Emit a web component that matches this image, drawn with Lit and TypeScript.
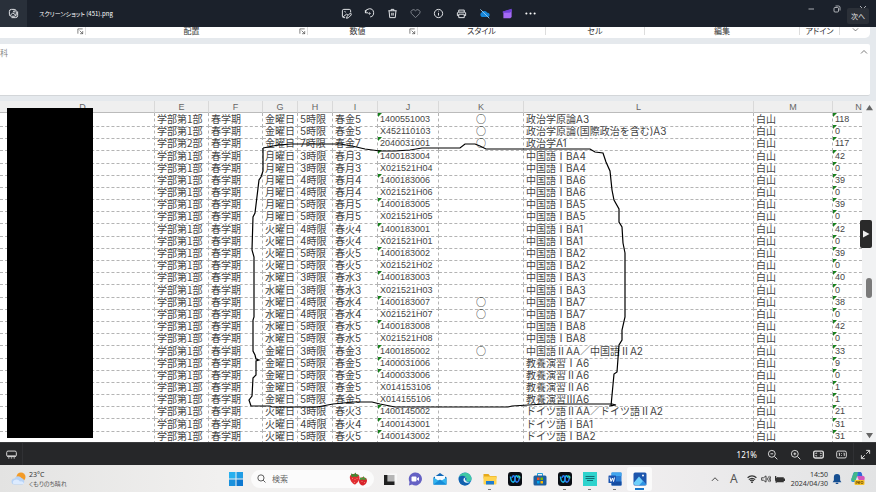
import { LitElement, html, css, svg } from "lit";
import { customElement } from "lit/decorators.js";
import { classMap } from "lit/directives/class-map.js";

type Course = [string, string, string, string, string, boolean, string, string];

// [department, day, period, slot, code, circle, title, seats]
const COURSES: Course[] = [
  ["学部第1部", "金曜日", "5時限", "春金5", "1400551003", true, "政治学原論A3", "118"],
  ["学部第1部", "金曜日", "5時限", "春金5", "X452110103", true, "政治学原論(国際政治を含む)A3", "0"],
  ["学部第2部", "金曜日", "7時限", "春金7", "2040031001", true, "政治学A1", "117"],
  ["学部第1部", "月曜日", "3時限", "春月3", "1400183004", false, "中国語ⅠBA4", "42"],
  ["学部第1部", "月曜日", "3時限", "春月3", "X021521H04", false, "中国語ⅠBA4", "0"],
  ["学部第1部", "月曜日", "4時限", "春月4", "1400183006", false, "中国語ⅠBA6", "39"],
  ["学部第1部", "月曜日", "4時限", "春月4", "X021521H06", false, "中国語ⅠBA6", "0"],
  ["学部第1部", "月曜日", "5時限", "春月5", "1400183005", false, "中国語ⅠBA5", "39"],
  ["学部第1部", "月曜日", "5時限", "春月5", "X021521H05", false, "中国語ⅠBA5", "0"],
  ["学部第1部", "火曜日", "4時限", "春火4", "1400183001", false, "中国語ⅠBA1", "42"],
  ["学部第1部", "火曜日", "4時限", "春火4", "X021521H01", false, "中国語ⅠBA1", "0"],
  ["学部第1部", "火曜日", "5時限", "春火5", "1400183002", false, "中国語ⅠBA2", "39"],
  ["学部第1部", "火曜日", "5時限", "春火5", "X021521H02", false, "中国語ⅠBA2", "0"],
  ["学部第1部", "水曜日", "3時限", "春水3", "1400183003", false, "中国語ⅠBA3", "40"],
  ["学部第1部", "水曜日", "3時限", "春水3", "X021521H03", false, "中国語ⅠBA3", "0"],
  ["学部第1部", "水曜日", "4時限", "春水4", "1400183007", true, "中国語ⅠBA7", "38"],
  ["学部第1部", "水曜日", "4時限", "春水4", "X021521H07", true, "中国語ⅠBA7", "0"],
  ["学部第1部", "水曜日", "5時限", "春水5", "1400183008", false, "中国語ⅠBA8", "42"],
  ["学部第1部", "水曜日", "5時限", "春水5", "X021521H08", false, "中国語ⅠBA8", "0"],
  ["学部第1部", "金曜日", "3時限", "春金3", "1400185002", true, "中国語ⅡAA／中国語ⅡA2", "33"],
  ["学部第1部", "金曜日", "5時限", "春金5", "1400031006", false, "教養演習ⅠA6", "9"],
  ["学部第1部", "金曜日", "5時限", "春金5", "1400033006", false, "教養演習ⅡA6", "0"],
  ["学部第1部", "金曜日", "5時限", "春金5", "X014153106", false, "教養演習ⅡA6", "1"],
  ["学部第1部", "金曜日", "5時限", "春金5", "X014155106", false, "教養演習ⅢA6", "1"],
  ["学部第1部", "火曜日", "3時限", "春火3", "1400145002", false, "ドイツ語ⅡAA／ドイツ語ⅡA2", "21"],
  ["学部第1部", "火曜日", "4時限", "春火4", "1400143001", false, "ドイツ語ⅠBA1", "31"],
  ["学部第1部", "火曜日", "5時限", "春火5", "1400143002", false, "ドイツ語ⅠBA2", "31"],
];

const COLUMNS = ["D", "E", "F", "G", "H", "I", "J", "K", "L", "M", "N"];

const icon = (body: unknown) => html`<svg class="icon" viewBox="0 0 16 16" aria-hidden="true">${body}</svg>`;

// Roman numerals are set full-width, like the kanji around them.
const titleText = (title: string) =>
  title.split(/([ⅠⅡⅢ])/).map((part) => (/^[ⅠⅡⅢ]$/.test(part) ? html`<span class="roman">${part}</span>` : part));

const TOOLS: [string, unknown][] = [
  ["編集", svg`<path d="M14 6V4a2 2 0 0 0-2-2H4a2 2 0 0 0-2 2v8a2 2 0 0 0 2 2h2M3 13l5-4 2 1M5 5l2 1M14 7l-5 5-1 3 3-1 4-4Z"/>`],
  ["回転", svg`<path d="M2 7a6 6 0 1 1 7 6M2 3v4h4"/><circle cx="8" cy="8" r="1"/>`],
  ["削除", svg`<path d="M2 4h12M6 4V2h4v2M3 4l1 10h8l1-10M7 7v4M9 7v4"/>`],
  ["お気に入り", svg`<path class="dim" d="M8 14 2 8a3 3 0 0 1 6-4 3 3 0 0 1 6 4Z"/>`],
  ["情報", svg`<circle cx="8" cy="8" r="6"/><path d="M8 7v4M8 4v1"/>`],
  ["印刷", svg`<path d="M4 6V3h8v3M4 11H2V7l1-1h10l1 1v4h-2M4 9h8v5H4Z"/>`],
  ["OneDrive", svg`<path class="cloud" d="M4 13a4 4 0 0 1 0-7 5 5 0 0 1 8 1 3 3 0 0 1 1 6Z"/><path class="slash" d="m2 2 13 13"/>`],
  ["Clipchamp", svg`<path class="clip" d="M2 5 14 2v11l-2 2H2Z"/><path class="clip-top" d="M1 5 14 1v4l-3 2H1Z"/>`],
  ["その他", svg`<g class="dots"><circle cx="2" cy="8" r="1.5"/><circle cx="8" cy="8" r="1.5"/><circle cx="14" cy="8" r="1.5"/></g>`],
];

const ZOOM_TOOLS: [string, unknown][] = [
  ["縮小", svg`<circle cx="7" cy="7" r="5"/><path d="m11 11 4 4M5 7h4"/>`],
  ["拡大", svg`<circle cx="7" cy="7" r="5"/><path d="m11 11 4 4M5 7h4M7 5v4"/>`],
  ["ウィンドウに合わせる", svg`<rect x="1" y="3" width="14" height="10" rx="2" stroke-width="2"/><path d="M4 7V6h2M12 7V6h-2M4 9v1h2M12 9v1h-2"/>`],
  ["実際のサイズ", svg`<rect x="1" y="3" width="14" height="10" rx="2"/><path d="M4 6h1v4M11 6h1v4M8 6v1M8 9v1"/>`],
];

const webex = svg`<rect width="28" height="28" rx="6" fill="#0a0d14"/><g fill="none" stroke-width="3"><path d="M5 9c1 14 8 14 9 5s5-8 6-2" stroke="#19b6e6"/><path d="M23 9c-1 14-8 14-9 5s-5-8-6-2" stroke="#2d74ea"/><path d="M20 8c3 0 4 2 3 5" stroke="#42d39b"/></g>`;

const APPS: { name: string; art: unknown; open?: boolean; active?: boolean }[] = [
  { name: "タスク ビュー", art: svg`<path d="M8 3h20v18H8Z" fill="#f8f8f8"/><path d="M9 6h14v14H9Z" fill="#b5b5b5"/><path d="M2 6h7v13h14v7H2Z" fill="#202020"/>` },
  { name: "チャット", art: svg`<path d="M14 1a13 13 0 1 1-6 24l-6 2 1-7A13 13 0 0 1 14 1Z" fill="#6561c4"/><rect x="7" y="9" width="10" height="10" rx="2" fill="#fff"/><path d="m18 13 4-3v8l-4-3Z" fill="#fff"/>` },
  { name: "メール", art: svg`<path d="M1 11 14 2l13 9v14H1Z" fill="#1267b7"/><path d="M4 8h20v9H4Z" fill="#f4fbff"/><path d="m1 11 13 8 13-8v14H1Z" fill="#32b4ef"/><path d="m1 25 13-10 13 10Z" fill="#168cd8"/>` },
  { name: "Edge", art: svg`<circle cx="14" cy="14" r="13" fill="#1478cf"/><path d="M2 10C7-2 25-1 27 13c0 7-8 8-11 5 4-6-5-12-14-8Z" fill="#3fc9a4"/><path d="M2 11c5-7 15-3 15 3-6-3-7 8 6 9C16 31-1 27 2 11Z" fill="#1261ae"/><path d="M16 11c-5 2-1 10 7 9-6 4-13 0-12-5 0-3 3-4 5-4Z" fill="#eef8fb"/>` },
  { name: "エクスプローラー", open: true, art: svg`<path d="M1 4h10l3 4h13v5H1Z" fill="#e6a91b"/><rect x="1" y="9" width="26" height="16" rx="2" fill="#ffd34f"/><path d="M6 18h16v7H6Z" fill="#1d7bd1"/>` },
  { name: "Webex", art: webex },
  { name: "Microsoft Store", art: svg`<path d="M9 8V3h10v5" fill="none" stroke="#1d9fdc" stroke-width="2"/><rect x="1" y="7" width="26" height="20" rx="3" fill="#1d5f9f"/><path d="M8 11h5v5H8Z" fill="#f25022"/><path d="M15 11h5v5h-5Z" fill="#7fba00"/><path d="M8 18h5v5H8Z" fill="#00a4ef"/><path d="M15 18h5v5h-5Z" fill="#ffb900"/>` },
  { name: "Webex 会議", open: true, art: webex },
  { name: "メモ", open: true, art: svg`<rect width="28" height="28" fill="#2ed3cd"/><path d="M5 9h18M5 13h18M8 17h12" stroke="#126d74" stroke-width="2"/>` },
  { name: "Word", open: true, art: svg`<rect x="7" y="1" width="20" height="26" rx="2" fill="#2b7cd3"/><path d="M7 1h20v7H7Z" fill="#41a5ee"/><path d="M7 19h20v8H7Z" fill="#164da0"/><rect x="1" y="7" width="15" height="15" rx="1" fill="#1b54b0"/><path d="m4 11 2 8 3-7 2 7 2-8" stroke="#fff" stroke-width="2" fill="none"/>` },
  { name: "フォト", open: true, active: true, art: svg`<rect x="1" y="1" width="26" height="26" rx="3" fill="#1d56ad"/><path d="M1 22 12 9l15 17H3Z" fill="#6fd0fb"/><path d="m12 27 8-9 7 8Z" fill="#2d93e4"/><circle cx="20" cy="7" r="2" fill="#fff"/>` },
];

@customElement("app-root")
export class AppRoot extends LitElement {
  static styles = css`
    :host {
      display: flex;
      flex-direction: column;
      height: 100vh;
      overflow: hidden;
      position: relative;
      background: #e5e9ed;
      font-family: "Noto Sans", "Noto Sans CJK JP", sans-serif;
      font-size: 8px;
      color: #333;
    }
    * { box-sizing: border-box; }
    button {
      border: 0;
      padding: 0;
      margin: 0;
      background: none;
      color: inherit;
      font: inherit;
      display: grid;
      place-items: center;
    }
    .icon {
      width: 11px;
      height: 11px;
      display: block;
      fill: none;
      stroke: currentColor;
      stroke-width: 1.4;
    }
    .titlebar {
      flex: none;
      height: 27px;
      display: grid;
      grid-template-columns: 1fr auto 1fr;
      background: #1b212b;
      color: #e8eaed;
    }
    .file { display: flex; align-items: center; gap: 12px; }
    .app { width: 27px; height: 27px; background: #29303a; }
    .name {
      font: 6px "Noto Sans CJK JP", sans-serif;
      font-feature-settings: "palt";
      white-space: nowrap;
      color: #fff;
    }
    .tools { display: flex; }
    .tools button { width: 23px; }
    .dim { stroke: #7d828a; }
    .cloud { fill: #1686d9; stroke: none; }
    .slash { stroke: #8fc5ee; }
    .clip { fill: #a46af5; stroke: none; }
    .clip-top { fill: #7141d8; stroke: none; }
    .dots { fill: #fff; stroke: none; }
    .window { display: flex; justify-content: flex-end; height: 17px; }
    .window button { width: 26px; }
    .window .icon { width: 8px; height: 8px; }
    .next {
      position: absolute;
      right: 7px;
      top: 8px;
      width: 22px;
      height: 16px;
      border-radius: 2px;
      background: #2b3038;
      color: #eee;
      font-size: 7px;
      font-feature-settings: "palt";
    }
    .ribbon {
      flex: none;
      height: 11px;
      margin-right: 6px;
      display: grid;
      grid-template-columns: 86fr 222fr 110fr 128fr 99fr 155fr 40fr 30fr;
      background: #fff;
      border-radius: 0 0 5px 0;
      line-height: 8px;
      font-feature-settings: "palt";
      text-align: center;
    }
    .group { display: flex; height: 8px; border-right: 1px solid #ddd; }
    .group span { flex: 1; }
    .group:last-child { border: 0; justify-content: center; }
    .launch { width: 10px; }
    .ribbon .icon { width: 7px; height: 7px; }
    .formula {
      flex: none;
      height: 52px;
      margin: 6px 6px 5px 0;
      display: flex;
      justify-content: space-between;
      align-items: flex-start;
      padding: 4px 2px 0 0;
      background: #fff;
      border-bottom: 1px solid #d3d6d9;
      border-radius: 0 2px 2px 0;
      color: #888;
      line-height: 10px;
    }
    .formula .icon { width: 8px; height: 8px; color: #444; }
    .sheet { flex: 1; min-height: 0; position: relative; display: flex; background: #fff; }
    table { flex: 1; min-width: 0; display: flex; flex-direction: column; overflow: hidden; }
    thead { flex: none; display: block; }
    tbody { flex: 1; min-height: 0; display: grid; grid-template-rows: repeat(27, minmax(0, 1fr)); }
    tr {
      display: grid;
      grid-template-columns: 155fr 54px 54px 35px 35px 45px 61px 85px 230fr 79px 29px;
      min-height: 0;
    }
    th {
      height: 12px;
      padding: 0;
      background: #efefef;
      border-right: 1px solid #d9d9d9;
      border-bottom: 1px solid #bbb;
      font: 9px/12px "Liberation Sans", sans-serif;
      color: #666;
    }
    th:first-child { padding-left: 11px; }
    th:last-child { padding-left: 22px; border-right: 0; }
    td {
      padding: 0 0 0 2px;
      border-right: 1px dashed #b4b4b4;
      border-bottom: 1px dashed #b4b4b4;
      font: 10px/12px Inter, "Noto Sans CJK JP", sans-serif;
      color: #444;
      white-space: nowrap;
      position: relative;
    }
    td:last-child { border-right: 0; }
    .cjk { font-family: "Noto Sans CJK JP", sans-serif; }
    .roman { display: inline-block; width: 10px; text-align: center; font-family: "Noto Sans CJK JP", sans-serif; line-height: 10px; }
    .code { font: 9px/13px "Liberation Sans", sans-serif; }
    .center { padding: 0; text-align: center; font-family: "Noto Sans CJK JP", sans-serif; color: #222; }
    .flag::before {
      content: "";
      position: absolute;
      left: 0;
      top: 0;
      border-top: 4px solid #16801c;
      border-right: 4px solid transparent;
    }
    .scroll {
      width: 14px;
      display: flex;
      flex-direction: column;
      align-items: center;
      justify-content: space-between;
      padding: 3px 0;
      background: #f1f2f3;
    }
    .scroll .icon { width: 7px; height: 7px; fill: #666; stroke: none; }
    .thumb {
      position: absolute;
      right: 4px;
      top: 52%;
      width: 6px;
      height: 20px;
      border-radius: 3px;
      background: #7a7a7a;
    }
    .forward {
      position: absolute;
      right: 4px;
      top: 35%;
      width: 12px;
      height: 28px;
      border-radius: 2px;
      background: #2a2a2a;
      color: #eee;
    }
    .forward .icon { width: 8px; height: 8px; fill: #eee; stroke: none; }
    .mask { position: absolute; left: 7px; top: 7px; bottom: 4px; width: 86px; background: #000; }
    .pen {
      position: absolute;
      inset: 0;
      width: 100%;
      height: 100%;
      fill: none;
      stroke: #000;
      stroke-width: 1.2;
      pointer-events: none;
    }
    .status {
      flex: none;
      height: 23px;
      display: flex;
      align-items: stretch;
      border-top: 1px solid #3a3b3d;
      background: #262729;
      color: #ddd;
    }
    .status button { width: 23px; }
    .film { border-right: 1px solid #303134; margin-right: auto; }
    .level { align-self: center; padding-right: 4px; color: #fff; }
    .full { border-left: 1px solid #303134; }
    .taskbar {
      flex: none;
      height: 27px;
      display: grid;
      grid-template-columns: 1fr auto 1fr;
      align-items: center;
      background: linear-gradient(90deg, #e3e3e2, #f1f0ef 25%, #f1eff0 70%, #e2e3e4);
    }
    .weather { display: flex; align-items: center; gap: 3px; padding-left: 11px; }
    .weather svg { width: 15px; height: 14px; }
    .weather p { margin: 0; font: 6px/9px "Noto Sans CJK JP", sans-serif; font-feature-settings: "palt"; color: #555; }
    .weather .temp { font: 7px/9px "Noto Sans", sans-serif; color: #333; }
    .apps { display: flex; align-items: center; }
    .start { width: 24px; height: 24px; }
    .start svg { width: 14px; height: 14px; }
    .search {
      width: 123px;
      height: 18px;
      margin: 0 3px;
      padding: 0 6px;
      display: flex;
      align-items: center;
      gap: 6px;
      border-radius: 9px;
      background: #fbfbfb;
    }
    .search .icon { width: 9px; height: 9px; flex: none; }
    .search input {
      flex: 1;
      min-width: 0;
      padding: 0;
      border: 0;
      background: none;
      outline: 0;
      font: 8px "Noto Sans CJK JP", sans-serif;
      color: #666;
    }
    .search input::placeholder { color: #666; }
    .berries { width: 19px; height: 14px; flex: none; }
    .task { width: 25px; height: 24px; position: relative; }
    .task svg { width: 14px; height: 14px; }
    .open::after {
      content: "";
      position: absolute;
      left: 11px;
      bottom: 1px;
      width: 3px;
      height: 1px;
      background: #777;
    }
    .active { background: #fafafa; border-radius: 3px; }
    .active::after { left: 8px; width: 9px; height: 2px; background: #1976c9; }
    .tray { display: flex; align-items: center; justify-content: flex-end; gap: 4px; padding-right: 11px; }
    .tray .icon { width: 10px; height: 10px; }
    .tray .solid { fill: #333; stroke: none; }
    .tray .bell { fill: #154e91; stroke: none; }
    .ime { font: 12px "Noto Sans", sans-serif; color: #555; padding: 0 5px 0 6px; }
    .clock { font: 7px/9px "Noto Sans", sans-serif; text-align: right; padding-left: 2px; }
    .copilot { width: 14px; height: 15px; margin-left: 5px; }
  `;

  private row([dept, day, period, slot, code, circle, title, seats]: Course) {
    return html`<tr>
      <td></td>
      <td class="cjk">${dept}</td>
      <td class="cjk">春学期</td>
      <td class="cjk">${day}</td>
      <td>${period}</td>
      <td>${slot}</td>
      <td class=${classMap({ code: true, flag: !code.startsWith("X") })}>${code}</td>
      <td class="center">${circle ? "○" : ""}</td>
      <td>${titleText(title)}</td>
      <td class="cjk">白山</td>
      <td class="code flag">${seats}</td>
    </tr>`;
  }

  private group(label: string, launcher = false) {
    return html`<div class="group">
      <span>${label}</span>
      ${launcher ? html`<button class="launch" aria-label="${label}の設定">${icon(svg`<path d="M2 13V2h11M6 6l7 7M13 7v6H7"/>`)}</button>` : ""}
    </div>`;
  }

  render() {
    return html`
      <header class="titlebar">
        <div class="file">
          <button class="app" aria-label="フォト">${icon(svg`<rect x="2" y="2" width="10" height="10" rx="3"/><path d="M3 11l4-4 5 4M14 5v6a3 3 0 0 1-3 3H5"/><circle cx="9" cy="5" r="1"/>`)}</button>
          <span class="name">スクリーンショット (451).png</span>
        </div>
        <nav class="tools">${TOOLS.map(([name, art]) => html`<button aria-label=${name}>${icon(art)}</button>`)}</nav>
        <div class="window">
          <button aria-label="最小化">${icon(svg`<path d="M3 8h11"/>`)}</button>
          <button aria-label="元に戻す">${icon(svg`<rect x="2" y="5" width="9" height="9" rx="2"/><path d="M5 2h6a3 3 0 0 1 3 3v6"/>`)}</button>
          <button aria-label="閉じる">${icon(svg`<path d="m2 2 12 12M14 2 2 14"/>`)}</button>
        </div>
      </header>
      <button class="next">次へ</button>

      <div class="ribbon">
        ${this.group("", true)} ${this.group("配置", true)} ${this.group("数値", true)}
        ${this.group("スタイル")} ${this.group("セル")} ${this.group("編集")} ${this.group("アドイン")}
        <div class="group">${icon(svg`<path d="m2 3 6 6 6-6"/>`)}</div>
      </div>

      <div class="formula"><span>科</span>${icon(svg`<path d="m2 11 6-6 6 6"/>`)}</div>

      <main class="sheet">
        <table>
          <thead><tr>${COLUMNS.map((c) => html`<th scope="col">${c}</th>`)}</tr></thead>
          <tbody>${COURSES.map((c) => this.row(c))}</tbody>
        </table>
        <div class="scroll">
          ${icon(svg`<path d="M8 2 16 14H0Z"/>`)}
          ${icon(svg`<path d="M8 14 16 2H0Z"/>`)}
          <div class="thumb"></div>
        </div>
        <div class="mask"></div>
        <svg class="pen" viewBox="0 101 876 341" preserveAspectRatio="none" aria-hidden="true">
          <path d="M263 148 278 145 292 144H340L352 146 365 149 380 151H395L410 150 422 148H460L465 144H475L480 146 486 149H590L595 152 603 153 606 162 610 171 612 190 614 200 619 209V222L622 227 623 243 625 253V317L622 330V340L619 345 617 372 614 374 611 406M609 406 616 405 612 404H545L512 406 508 407H395L380 404 372 402H353L333 404 317 407H272L270 406H251L249 400 252 396 253 378 256 375V361L259 360 256 359 255 355 253 351V320L254 317V257L252 250 253 217 255 213 259 180 261 177 263 171V148"/>
        </svg>
        <button class="forward" aria-label="次の画像">${icon(svg`<path d="M2 1 15 8 2 15Z"/>`)}</button>
      </main>

      <div class="status">
        <button class="film" aria-label="フィルムストリップ">${icon(svg`<rect x="1" y="3" width="14" height="8" rx="2"/><path d="M3 13h2M7 13h2M11 13h2M2 10h12"/>`)}</button>
        <span class="level">121%</span>
        ${ZOOM_TOOLS.map(([name, art]) => html`<button aria-label=${name}>${icon(art)}</button>`)}
        <button class="full" aria-label="全画面表示">${icon(svg`<path d="M9 2h5v5M14 2 9 7M2 9v5h5M2 14l5-5"/>`)}</button>
      </div>

      <footer class="taskbar">
        <div class="weather">
          <svg viewBox="0 0 30 28" aria-hidden="true">
            <circle cx="20" cy="10" r="9" fill="#f39a25"/>
            <path d="M7 25a6 6 0 0 1 0-12 8 8 0 0 1 14-1 7 7 0 0 1 2 13Z" fill="#b7d3f6"/>
            <path d="M5 24a5 5 0 0 1 2-8 9 9 0 0 1 11 3 6 6 0 0 1 8 5Z" fill="#dcebff"/>
          </svg>
          <div><p class="temp">23°C</p><p>くもりのち晴れ</p></div>
        </div>
        <nav class="apps">
          <button class="start" aria-label="スタート">
            <svg viewBox="0 0 28 28"><path d="M0 0h13v13H0Z" fill="#27b0ee"/><path d="M15 0h13v13H15Z" fill="#1f9ce4"/><path d="M0 15h13v13H0Z" fill="#1a91dd"/><path d="M15 15h13v13H15Z" fill="#0d78d0"/></svg>
          </button>
          <label class="search">
            ${icon(svg`<circle cx="7" cy="7" r="5.5"/><path d="m11 11 4 4"/>`)}
            <input type="search" placeholder="検索" aria-label="検索" />
            <svg class="berries" viewBox="0 0 38 28" aria-hidden="true">
              <path d="M2 8c4-7 18-6 19 2 1 7-6 14-9 15C7 24 0 15 2 8Z" fill="#e12f32"/>
              <path d="m4 3 6 2 3-4 2 4 6 1-6 4-4-1-6 1Z" fill="#3e8b34"/>
              <path d="M21 14c4-6 15-4 15 3 0 6-6 10-9 10-5-1-9-7-6-13Z" fill="#d8242b"/>
              <path d="m22 11 5 1 2-4 2 4 5 2-5 2-4-1-5 1Z" fill="#4a9b3c"/>
              <path d="M7 13v1M12 15v1M16 12v1M11 20v1M26 19v1M31 20v1" stroke="#ffc9a9" stroke-width="2"/>
            </svg>
          </label>
          ${APPS.map((a) => html`<button class=${classMap({ task: true, open: !!a.open, active: !!a.active })} aria-label=${a.name}><svg viewBox="0 0 28 28">${a.art}</svg></button>`)}
        </nav>
        <div class="tray">
          ${icon(svg`<path d="m3 11 5-5 5 5"/>`)}
          <span class="ime">A</span>
          ${icon(svg`<path d="M1 6a10 10 0 0 1 14 0M3 9a7 7 0 0 1 10 0M5 11a4 4 0 0 1 6 0" stroke-width="2"/><circle cx="8" cy="13" r="1.5" class="solid"/>`)}
          ${icon(svg`<path d="M1 6h3l4-3v10l-4-3H1ZM10 6v4M12 4q3 4 0 8M14 3q4 5 0 10"/>`)}
          ${icon(svg`<path class="solid" d="M3 5h11v2h2v4h-2v2H3Z"/><path class="solid" d="M0 3h2v3h3v4l-2 2v2H1v-2L0 10Z"/>`)}
          <time class="clock" datetime="2024-04-30T14:50">14:50<br />2024/04/30</time>
          ${icon(svg`<path class="bell" d="M8 0a5 5 0 0 1 5 5v5l2 3H1l2-3V5a5 5 0 0 1 5-5ZM6 14h4v2H6Z"/>`)}
          <svg class="copilot" viewBox="0 0 28 30" aria-hidden="true">
            <path d="M8 2h9c4 0 4 4 5 8H12L8 22H4c-4 0-4-3-3-6L4 6c1-3 2-4 4-4Z" fill="#2b8fe0"/>
            <path d="M4 8c1-4 2-6 5-6h5l-5 18H4c-5 0-3-6-2-7Z" fill="#43b889"/>
            <path d="M12 10h11c5 0 5 4 4 7l-2 7H12c3 0 3-2 4-5Z" fill="#d256ba"/>
            <path d="M14 2h4c4 0 4 5 5 8h-8Z" fill="#3567d6"/>
            <rect x="7" y="18" width="20" height="10" rx="2" fill="#f7c228"/>
            <path d="M10 26v-5h3v3h-3M15 26v-5h3v2h-3l3 3M20 21h4v4h-4Z" fill="none" stroke="#4a3200"/>
          </svg>
        </div>
      </footer>
    `;
  }
}
